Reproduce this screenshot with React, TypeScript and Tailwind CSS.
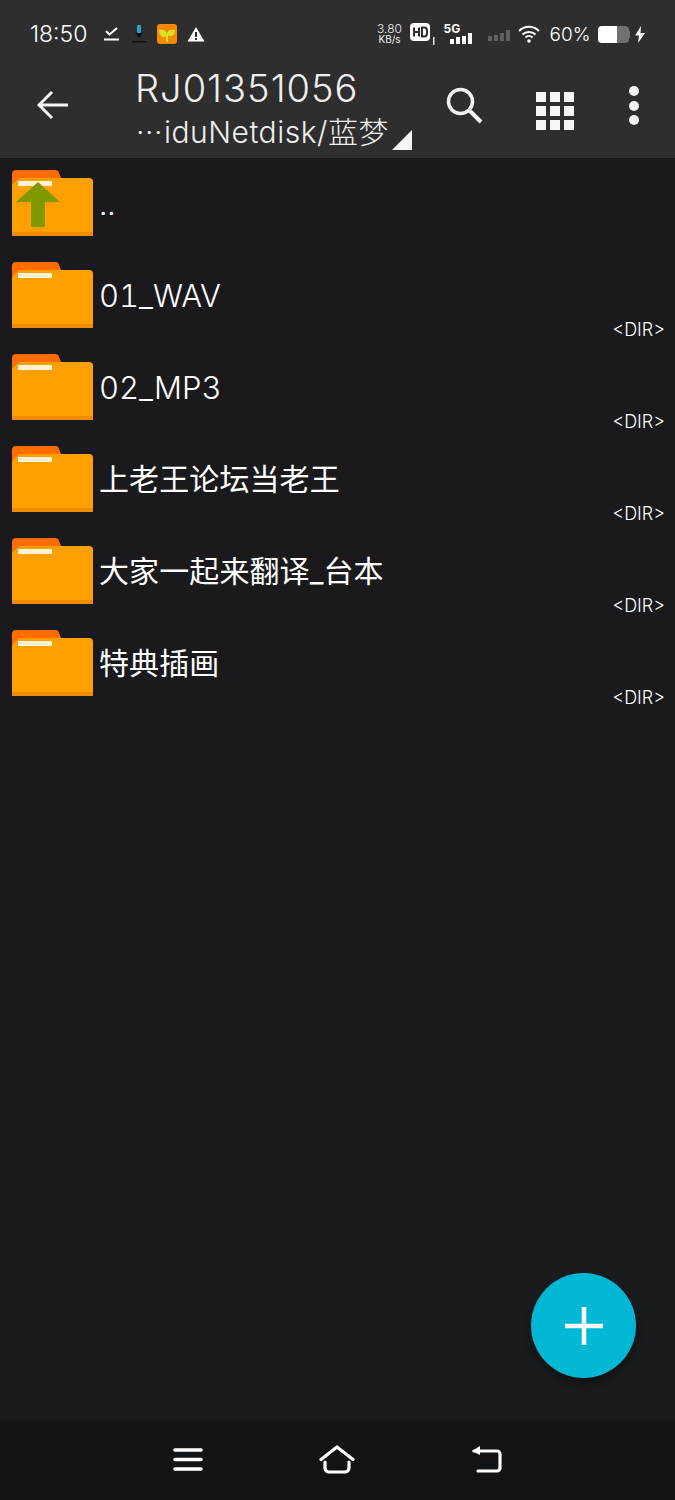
const FOLDERS = [
  { name: '..', latin: true },
  { name: '01_WAV', latin: true },
  { name: '02_MP3', latin: true },
  { name: '上老王论坛当老王', latin: false },
  { name: '大家一起来翻译_台本', latin: false },
  { name: '特典插画', latin: false },
];

const FONT = "font-['Inter','Noto_Sans_CJK_SC',sans-serif]";

function FolderIcon({ up }: { up?: boolean }) {
  return (
    <svg width="81" height="66" viewBox="0 0 81 66" className="shrink-0">
      <path d="M0 4a4 4 0 0 1 4-4h39a4 4 0 0 1 4 3l2 5H40v20H0z" fill="#ff6d00" />
      <path d="M0 15l7-7h70a4 4 0 0 1 4 4v54H0z" fill="#ffa000" />
      <rect x="0" y="62" width="81" height="4" fill="#f08c00" />
      <rect x="6" y="11" width="34" height="5" fill="#fff3d6" />
      {up && <path d="M26 12L48 32H33V57H19V32H4z" fill="#7f9a00" />}
    </svg>
  );
}

function FileRow({ name, latin, up }: { name: string; latin: boolean; up?: boolean }) {
  return (
    <div className="relative flex h-[92px] items-start pl-3 pt-3">
      <FolderIcon up={up} />
      <span
        className={
          latin
            ? 'ml-[6px] mt-[14px] text-[31px] font-light tabular-nums leading-[40px] text-white'
            : 'ml-[6px] mt-[13px] text-[30px] leading-[40px] tracking-[0.1px] text-white'
        }
      >
        {name}
      </span>
      {!up && <span className="absolute bottom-[2px] right-[10px] text-[18px] font-light leading-[20px] text-white">&lt;DIR&gt;</span>}
    </div>
  );
}

function StatusBar() {
  return (
    <div className="flex h-[66px] items-center pl-[30px] pr-[30px] pt-[2px] text-white">
      <span className="text-[23px] font-light leading-none text-white">18:50</span>
      <svg width="15" height="16" viewBox="0 0 15 16" className="ml-[17px]">
        <path d="M2 5l3.500 3.500L13 2" fill="none" stroke="#fff" strokeWidth="2" />
        <rect x="0" y="12.500" width="15" height="2" fill="#fff" />
      </svg>
      <svg width="14" height="20" viewBox="0 0 14 20" className="ml-[13px]">
        <rect x="5" y="1" width="4" height="8" rx="1" fill="#2b9fc0" />
        <path d="M3 9h8l-4 5z" fill="#111" />
        <rect x="0" y="17" width="14" height="1.500" fill="#111" />
      </svg>
      <svg width="20" height="20" viewBox="0 0 20 20" className="ml-[11px]">
        <rect width="20" height="20" rx="3" fill="#f58a07" />
        <path d="M2 6c4-1 7 0 8 4 0 2-1 3-3 3-3 0-5-3-5-7zM10 9c1-3 4-4 8-3 0 4-2 6-5 6-2 0-3-1-3-3z" fill="#d9e021" />
        <rect x="9" y="10" width="2" height="8" fill="#d9e021" />
      </svg>
      <svg width="18" height="16" viewBox="0 0 18 16" className="ml-[10px]">
        <path d="M9 1l8.500 14.500H.5z" fill="#fff" />
        <rect x="8" y="6" width="2" height="5" fill="#2e2e2e" />
        <rect x="8" y="12" width="2" height="2" fill="#2e2e2e" />
      </svg>
      <div className="ml-auto flex items-center">
        <div className="flex w-[24px] flex-col items-center text-[10px] leading-[11px] text-[#eee]">
          <span className="text-[12px] font-light">3.80</span>
          <span>KB/s</span>
        </div>
        <svg width="26" height="28" viewBox="0 0 26 28" className="ml-[8px] mt-[3px]">
          <rect x="0" y="1" width="20" height="18" rx="4" fill="#fff" />
          <path d="M4 5.500v9M9 5.500v9M4 10h5" stroke="#2e2e2e" strokeWidth="2" fill="none" />
          <path d="M12 5.500h2a3 3 0 0 1 3 3v3a3 3 0 0 1-3 3h-2z" stroke="#2e2e2e" strokeWidth="2" fill="none" />
          <rect x="23" y="15" width="1.500" height="8" fill="#ddd" />
        </svg>
        <div className="relative ml-[6px] h-[20px] w-[30px]">
          <span className="absolute -top-[1px] left-[2px] text-[12px] font-bold leading-[12px] text-white">5G</span>
          <div className="absolute bottom-0 right-0 flex items-end gap-[2px]">
            <i className="h-[5px] w-[4px] bg-white" />
            <i className="h-[7px] w-[4px] bg-white" />
            <i className="h-[8px] w-[4px] bg-white" />
            <i className="h-[11px] w-[4px] bg-white" />
          </div>
        </div>
        <div className="ml-[16px] mt-[2px] flex items-end gap-[2px] self-center">
          <i className="h-[5px] w-[4px] bg-[#606060]" />
          <i className="h-[6px] w-[4px] bg-[#606060]" />
          <i className="h-[8px] w-[4px] bg-[#606060]" />
          <i className="h-[11px] w-[4px] bg-[#606060]" />
        </div>
        <svg width="22" height="18" viewBox="0 0 22 18" className="ml-[8px]">
          <path d="M1 6a14 14 0 0 1 20 0M4.500 9.500a9.500 9.500 0 0 1 13 0M7.500 12.500a5 5 0 0 1 7 0" fill="none" stroke="#fff" strokeWidth="2" />
          <circle cx="11" cy="16" r="1.800" fill="#fff" />
        </svg>
        <span className="ml-[10px] text-[19px] font-light leading-none text-white">60%</span>
        <div className="ml-[7px] flex h-[17px] w-[31px] overflow-hidden rounded-[4px] bg-[#707070]">
          <div className="h-full w-[19px] bg-white" />
        </div>
        <div className="h-[7px] w-[1.500px] bg-[#707070]" />
        <svg width="10" height="17" viewBox="0 0 10 17" className="ml-[5px]">
          <path d="M6 0L0 9.500h4L3 17l7-10H5.500z" fill="#fff" />
        </svg>
      </div>
    </div>
  );
}

function ToolBar() {
  return (
    <div className="flex h-[92px] items-start">
      <svg width="32" height="30" viewBox="0 0 32 30" className="ml-[37px] mt-[24px] shrink-0">
        <path d="M15 2L2 15l13 13M2 15h29" fill="none" stroke="#f5f5f5" strokeWidth="3" />
      </svg>
      <div className="ml-[66px] flex flex-col">
        <span className="text-[38px] font-light leading-[44px] tracking-[1px] text-[#eee]">RJ01351056</span>
        <span className="relative mt-[1px] w-[279px] text-[30px] font-light leading-[42px] tracking-[0.5px] text-[#eee]">
          <span className="inline-block w-[29px] text-center">···</span>iduNetdisk/蓝梦
          <svg width="22" height="22" viewBox="0 0 22 22" className="absolute right-0 top-[18px]">
            <path d="M20 1v20H0z" fill="#f5f5f5" />
          </svg>
        </span>
      </div>
      <svg width="40" height="40" viewBox="0 0 40 40" className="ml-[30px] mt-[19px] shrink-0">
        <circle cx="16.500" cy="16.500" r="12" fill="none" stroke="#f0f0f0" strokeWidth="3.500" />
        <path d="M25 25l12 12" stroke="#f0f0f0" strokeWidth="4" />
      </svg>
      <div className="ml-[52px] mt-[26px] grid shrink-0 grid-cols-3 gap-[4.500px]">
        {Array.from({ length: 9 }).map((_, i) => (
          <div key={i} className="size-[9.500px] bg-[#f5f5f5]" />
        ))}
      </div>
      <div className="ml-[55px] mt-[20px] flex shrink-0 flex-col gap-[4.500px]">
        <div className="size-[10px] rounded-full bg-[#f2f2f2]" />
        <div className="size-[10px] rounded-full bg-[#f2f2f2]" />
        <div className="size-[10px] rounded-full bg-[#f2f2f2]" />
      </div>
    </div>
  );
}

function NavBar() {
  return (
    <div className="flex h-[80px] items-start bg-[#101416] pl-[173px] pt-[25px]">
      <svg width="30" height="26" viewBox="0 0 30 26">
        <path d="M2 5h26M2 14.500h26M2 24h26" stroke="#fff" strokeWidth="3.600" strokeLinecap="round" />
      </svg>
      <svg width="38" height="30" viewBox="0 0 38 30" className="ml-[116px]">
        <path d="M2 14.500L18 2l16 12.500" fill="none" stroke="#fff" strokeWidth="3.200" strokeLinecap="round" strokeLinejoin="round" />
        <path d="M6 17v6a4 4 0 0 0 4 4h16a4 4 0 0 0 4-4v-6" fill="none" stroke="#fff" strokeWidth="3.200" strokeLinecap="round" />
      </svg>
      <svg width="32" height="28" viewBox="0 0 32 28" className="ml-[114px]">
        <path d="M3 6h23a3 3 0 0 1 3 3v14a3 3 0 0 1-3 3H7" fill="none" stroke="#fff" strokeWidth="3.200" strokeLinecap="round" />
        <path d="M1 6l8-5v9z" fill="#fff" />
      </svg>
    </div>
  );
}

export default function App() {
  return (
    <div className={`${FONT} relative flex h-[1500px] w-[675px] flex-col overflow-hidden bg-[#191c1e]`}>
      <div className="bg-[#2e2e2e]">
        <StatusBar />
        <ToolBar />
      </div>
      <div className="flex-1">
        <div className="bg-[#1a1a1c]">
          {FOLDERS.map((f, i) => (
            <FileRow key={f.name} name={f.name} latin={f.latin} up={i === 0} />
          ))}
        </div>
      </div>
      <NavBar />
      <button className="absolute left-[531px] top-[1273px] flex size-[105px] items-center justify-center rounded-full bg-[#00b8d4] shadow-[0_6px_10px_rgba(0,0,0,0.4)]">
        <svg width="38" height="38" viewBox="0 0 38 38">
          <path d="M19 0v38M0 19h38" stroke="#fff" strokeWidth="4.500" />
        </svg>
      </button>
    </div>
  );
}
